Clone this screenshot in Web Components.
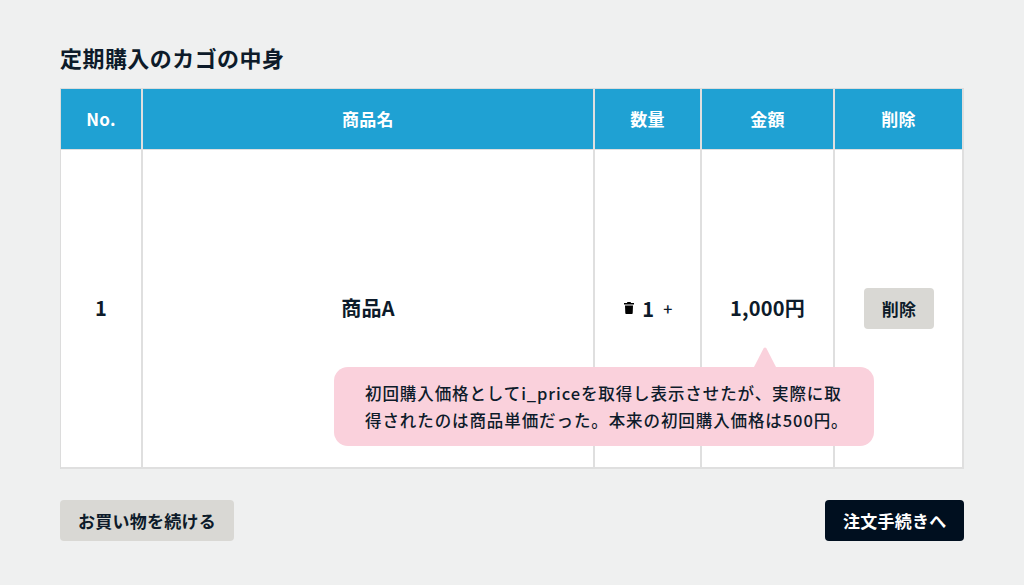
<!DOCTYPE html>
<html lang="ja">
<head>
<meta charset="utf-8">
<title>定期購入のカゴの中身</title>
<style>
  html, body { margin: 0; height: 100%; }
  body {
    background: #eff0f0;
    color: #0d1b2a;
    font-family: "Noto Sans CJK JP", "Noto Sans", sans-serif;
  }
</style>
</head>
<body>
<cart-page>
  <span slot="title">定期購入のカゴの中身</span>
  <cart-table></cart-table>
  <cart-button slot="back">お買い物を続ける</cart-button>
  <cart-button slot="next" variant="primary">注文手続きへ</cart-button>
</cart-page>

<script>
const pageTemplate = document.createElement('template');
pageTemplate.innerHTML = `
<style>
  :host {
    display: block;
    box-sizing: border-box;
    width: 1024px;
    height: 585px;
    padding: 43px 60px 0;
  }
  h2 {
    margin: 0 0 16px;
    font-size: 22px;
    line-height: 29px;
    font-weight: 700;
    letter-spacing: 0.02em;
  }
  .actions {
    display: flex;
    justify-content: space-between;
    margin-top: 31px;
  }
</style>
<h2><slot name="title"></slot></h2>
<slot></slot>
<div class="actions">
  <slot name="back"></slot>
  <slot name="next"></slot>
</div>
`;

class CartPage extends HTMLElement {
  constructor() {
    super();
    this.attachShadow({ mode: 'open' });
    this.shadowRoot.appendChild(pageTemplate.content.cloneNode(true));
  }
}

const buttonTemplate = document.createElement('template');
buttonTemplate.innerHTML = `
<style>
  :host {
    display: inline-flex;
    align-items: center;
    justify-content: center;
    box-sizing: border-box;
    height: 41px;
    padding: 0 18px 1px;
    border-radius: 4px;
    background: #d9d8d4;
    color: #0d1b2a;
    font-size: 17px;
    line-height: 1;
    font-weight: 700;
    letter-spacing: 0.015em;
    white-space: nowrap;
    cursor: pointer;
  }
  :host([variant="primary"]) {
    padding: 0 17.5px 1px;
    background: #000f1f;
    color: #fff;
  }
</style>
<slot></slot>
`;

class CartButton extends HTMLElement {
  constructor() {
    super();
    this.attachShadow({ mode: 'open' });
    this.shadowRoot.appendChild(buttonTemplate.content.cloneNode(true));
  }
}

const balloonTemplate = document.createElement('template');
balloonTemplate.innerHTML = `
<style>
  :host {
    display: block;
    position: absolute;
    left: 274px;
    top: 279px;
    box-sizing: border-box;
    width: 540px;
    height: 79px;
    padding: 13px 0 0 31px;
    border-radius: 14px;
    background: #fad1dc;
    color: #0d1b2a;
    font-size: 16.5px;
    line-height: 27px;
    font-weight: 500;
    letter-spacing: 0.055em;
    white-space: nowrap;
  }
  .tail {
    position: absolute;
    left: 420px;
    top: -20px;
    width: 22px;
    height: 20px;
    display: block;
  }
</style>
<svg class="tail" viewBox="0 0 22 20" aria-hidden="true">
  <path d="M0 20L9.5 1.5Q11 -.5 12.5 1.5L22 20z" fill="#fad1dc"/>
</svg>
<slot></slot>
`;

class CartBalloon extends HTMLElement {
  constructor() {
    super();
    this.attachShadow({ mode: 'open' });
    this.shadowRoot.appendChild(balloonTemplate.content.cloneNode(true));
  }
}

const ICON_TRASH = `<svg viewBox="0 0 10 12" width="10" height="12" aria-hidden="true"><path d="M3.4 0h3.2l.4 1H10v1.6H0V1h3zM1 3.4h8l-.3 7.8q-.1.8-.8.8H2.100q-.7 0-.8-.8z" fill="#000"/></svg>`;

const tableTemplate = document.createElement('template');
tableTemplate.innerHTML = `
<style>
  :host {
    display: block;
    position: relative;
    width: 904px;
  }
  table {
    width: 904px;
    height: 381px;
    border-collapse: separate;
    border-spacing: 0;
    table-layout: fixed;
    background: #fff;
    border-top: 1px solid #dcdcdc;
    border-left: 1px solid #dcdcdc;
  }
  th, td {
    padding: 0;
    border-right: 2px solid #dfdfdf;
    border-bottom: 2px solid #dfdfdf;
    text-align: center;
    vertical-align: middle;
  }
  th {
    height: 59px;
    background: #1fa1d3;
    color: #fff;
    font-size: 17px;
    font-weight: 700;
    letter-spacing: 0.015em;
    padding-bottom: 1px;
    border-bottom-width: 1px;
  }
  td {
    font-size: 20px;
    font-weight: 700;
    letter-spacing: 0.01em;
    padding-bottom: 3px;
  }
  td:last-child { padding: 0 0 0 1px; }
  .qty {
    display: inline-flex;
    align-items: center;
    gap: 8px;
    margin-left: 2px;
  }
  .qty svg { display: block; }
  .plus { font-size: 16px; font-weight: 500; margin-left: 1px; }
</style>
<table>
  <colgroup>
    <col style="width:82px">
    <col style="width:452px">
    <col style="width:107px">
    <col style="width:133px">
    <col style="width:129px">
  </colgroup>
  <thead>
    <tr><th>No.</th><th>商品名</th><th>数量</th><th>金額</th><th>削除</th></tr>
  </thead>
  <tbody>
    <tr>
      <td>1</td>
      <td>商品A</td>
      <td><span class="qty">${ICON_TRASH}<span>1</span><span class="plus">+</span></span></td>
      <td>1,000円</td>
      <td><cart-button>削除</cart-button></td>
    </tr>
  </tbody>
</table>
<cart-balloon>初回購入価格としてi_priceを取得し表示させたが、実際に取<br>得されたのは商品単価だった。本来の初回購入価格は500円。</cart-balloon>
`;

class CartTable extends HTMLElement {
  constructor() {
    super();
    this.attachShadow({ mode: 'open' });
    this.shadowRoot.appendChild(tableTemplate.content.cloneNode(true));
  }
}

customElements.define('cart-button', CartButton);
customElements.define('cart-balloon', CartBalloon);
customElements.define('cart-table', CartTable);
customElements.define('cart-page', CartPage);
</script>
</body>
</html>
